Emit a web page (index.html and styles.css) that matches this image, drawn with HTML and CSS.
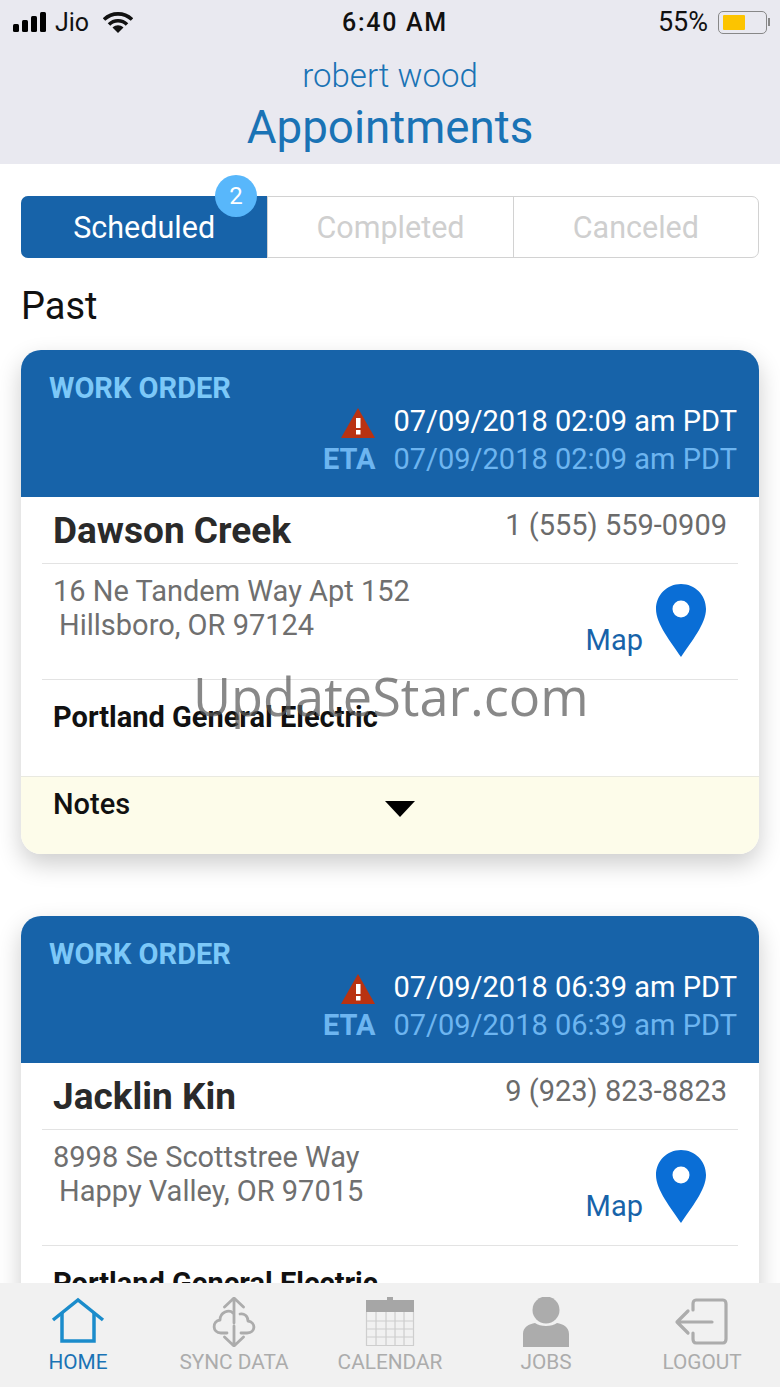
FILE: index.html
```html
<!DOCTYPE html>
<html lang="en">
<head>
    <meta charset="UTF-8">
    <meta name="viewport" content="width=device-width, initial-scale=1.0">
    <title>Appointments</title>
    <link rel="stylesheet" href="styles.css">
</head>
<body>
    <div class="app">
        <header class="top">
            <div class="status">
                <div class="status-left">
                    <svg class="signal" width="35" height="20" viewBox="0 0 35 20"><rect x="0" y="12" width="6" height="8" rx="1.5"/><rect x="9" y="8" width="6" height="12" rx="1.5"/><rect x="18" y="4" width="6" height="16" rx="1.5"/><rect x="27" y="0" width="6" height="20" rx="1.5"/></svg>
                    <span>Jio</span>
                    <svg class="wifi" width="30" height="21" viewBox="0 0 30 21"><path d="M1 7.5C9 0 21 0 29 7.5" fill="none" stroke="#111" stroke-width="3.6"/><path d="M6 12.5C11 7.5 19 7.5 24 12.5" fill="none" stroke="#111" stroke-width="3.6"/><path d="M9.5 15.5C13 12.5 17 12.5 20.5 15.5L15 21Z" fill="#111"/></svg>
                </div>
                <div class="status-time">6:40 AM</div>
                <div class="status-right">
                    <span>55%</span>
                    <div class="battery"><div class="battery-fill"></div></div>
                    <div class="battery-tip"></div>
                </div>
            </div>
            <div class="user">robert wood</div>
            <h1 class="title">Appointments</h1>
        </header>

        <main class="content">
            <div class="tabs">
                <div class="tab tab-active">Scheduled<span class="badge">2</span></div>
                <div class="tab">Completed</div>
                <div class="tab">Canceled</div>
            </div>
            <h2 class="section">Past</h2>

            <section class="card">
                <div class="card-head">
                    <div class="order">WORK ORDER</div>
                    <div class="date-row">
                        <svg class="warn" width="34" height="30" viewBox="0 0 34 30"><path d="M17 0L34 30H0Z" fill="#b93211"/><rect x="15" y="10" width="4.5" height="10" fill="#fff"/><rect x="15" y="22" width="4.5" height="4.5" fill="#fff"/></svg>
                        <span class="date">07/09/2018 02:09 am PDT</span>
                    </div>
                    <div class="date-row eta-row">
                        <b class="eta">ETA</b>
                        <span class="date">07/09/2018 02:09 am PDT</span>
                    </div>
                </div>
                <div class="row name-row">
                    <div class="name">Dawson Creek</div>
                    <div class="phone">1 (555) 559-0909</div>
                </div>
                <div class="row addr-row">
                    <div class="addr">16 Ne Tandem Way Apt 152<div class="addr-city">Hillsboro, OR 97124</div></div>
                    <div class="map">
                        <span>Map</span>
                        <svg width="50" height="73" viewBox="0 0 50 73"><path fill-rule="evenodd" d="M25 0C11 0 0 11 0 25C0 40 15 58 25 73C35 58 50 40 50 25C50 11 39 0 25 0ZM25 16.500A8.500 8.500 0 1 1 25 33.500A8.500 8.500 0 1 1 25 16.500Z" fill="#0a6ed6"/></svg>
                    </div>
                </div>
                <div class="company">Portland General Electric</div>
                <div class="notes">
                    <span>Notes</span>
                    <div class="caret"></div>
                </div>
            </section>

            <section class="card">
                <div class="card-head">
                    <div class="order">WORK ORDER</div>
                    <div class="date-row">
                        <svg class="warn" width="34" height="30" viewBox="0 0 34 30"><path d="M17 0L34 30H0Z" fill="#b93211"/><rect x="15" y="10" width="4.5" height="10" fill="#fff"/><rect x="15" y="22" width="4.5" height="4.5" fill="#fff"/></svg>
                        <span class="date">07/09/2018 06:39 am PDT</span>
                    </div>
                    <div class="date-row eta-row">
                        <b class="eta">ETA</b>
                        <span class="date">07/09/2018 06:39 am PDT</span>
                    </div>
                </div>
                <div class="row name-row">
                    <div class="name">Jacklin Kin</div>
                    <div class="phone">9 (923) 823-8823</div>
                </div>
                <div class="row addr-row">
                    <div class="addr">8998 Se Scottstree Way<div class="addr-city">Happy Valley, OR 97015</div></div>
                    <div class="map">
                        <span>Map</span>
                        <svg width="50" height="73" viewBox="0 0 50 73"><path fill-rule="evenodd" d="M25 0C11 0 0 11 0 25C0 40 15 58 25 73C35 58 50 40 50 25C50 11 39 0 25 0ZM25 16.500A8.500 8.500 0 1 1 25 33.500A8.500 8.500 0 1 1 25 16.500Z" fill="#0a6ed6"/></svg>
                    </div>
                </div>
                <div class="company">Portland General Electric</div>
            </section>
        </main>

        <nav class="tabbar">
            <div class="nav-item nav-active">
                <svg width="56" height="50" viewBox="0 0 56 50" fill="none" stroke="#1b8ccb" stroke-width="3.500"><path d="M3 23L28 3L53 23"/><path d="M12 16V44H44V16"/></svg>
                <span>HOME</span>
            </div>
            <div class="nav-item">
                <svg width="56" height="50" viewBox="0 0 56 50" fill="none" stroke="#acacac" stroke-width="2.800" stroke-linecap="round" stroke-linejoin="round"><path d="M28 1V26M18.500 10L28 1L37.500 10"/><path d="M28 29V49M18.500 40L28 49L37.500 40"/><path d="M21 36H15C6 36 6 24 14 23C14 15 23 12 27 16M35 36H41C50 36 50 25 42 24C42 19 38 16 34 17"/></svg>
                <span>SYNC DATA</span>
            </div>
            <div class="nav-item">
                <svg width="56" height="50" viewBox="0 0 56 50"><path d="M4 3H25V0H31V3H52V15H4Z" fill="#a6a6a6"/><path d="M4.500 15V48.500H51.500V15M4 24H52M4 32H52M4 40H52M14 15V48M24 15V48M33 15V48M42 15V48" fill="none" stroke="#cecece" stroke-width="1.200"/></svg>
                <span>CALENDAR</span>
            </div>
            <div class="nav-item">
                <svg width="56" height="50" viewBox="0 0 56 50" fill="#acacac"><circle cx="28" cy="13" r="13.500"/><path d="M5 50V37C5 30 11 27 17 26C22 30 34 30 39 26C45 27 51 30 51 37V50Z"/></svg>
                <span>JOBS</span>
            </div>
            <div class="nav-item">
                <svg width="56" height="50" viewBox="0 0 56 50" fill="none" stroke="#acacac" stroke-width="3.200" stroke-linecap="round" stroke-linejoin="round"><path d="M19 13V7C19 5 20 3 22 3H49C51 3 52 5 52 7V42C52 44 51 46 49 46H22C20 46 19 44 19 42V36"/><path d="M38 25H4M14 14L3 25L14 36"/></svg>
                <span>LOGOUT</span>
            </div>
        </nav>

        <div class="watermark">UpdateStar.com</div>
    </div>
</body>
</html>
```

FILE: styles.css
```css
* {
    box-sizing: border-box;
}
html, body {
    margin: 0;
    padding: 0;
}
body {
    font-family: Roboto, Arial, sans-serif;
    background: #fff;
}
.app {
    position: relative;
    width: 780px;
    height: 1387px;
    display: flex;
    flex-direction: column;
    overflow: hidden;
}

/* header */
.top {
    height: 164px;
    flex: none;
    background: #e9e9f0;
    text-align: center;
}
.status {
    height: 44px;
    display: grid;
    grid-template-columns: 1fr auto 1fr;
    align-items: center;
    padding: 0 10px 0 13px;
    font-size: 25px;
    color: #111;
}
.status-left {
    display: flex;
    align-items: center;
    gap: 7px;
}
.wifi {
    margin-left: 7px;
}
.status-time {
    padding-left: 7px;
    font-weight: 500;
    letter-spacing: 1.7px;
}
.status-right {
    display: flex;
    align-items: center;
    justify-content: flex-end;
    font-size: 27px;
}
.battery {
    width: 49px;
    height: 23px;
    margin-left: 10px;
    padding: 3px 4px;
    border: 1.5px solid #888;
    border-radius: 5px;
}
.battery-fill {
    width: 22px;
    height: 100%;
    background: #fcc400;
    border-radius: 1px;
}
.battery-tip {
    width: 2px;
    height: 8px;
    margin-left: 1px;
    background: #888;
}
.user {
    margin-top: 13px;
    font-size: 33px;
    line-height: 38px;
    font-weight: 300;
    color: #1a73b5;
}
.title {
    margin: 6px 0 0;
    font-size: 45.7px;
    line-height: 54px;
    font-weight: 400;
    color: #1a73b5;
}

/* main list */
.content {
    flex: 1;
    min-height: 0;
    overflow: hidden;
    padding: 32px 21px 0;
}
.tabs {
    display: grid;
    grid-template-columns: repeat(3, 1fr);
    height: 62px;
    border: 1px solid #d2d2d2;
    border-radius: 7px;
}
.tab {
    position: relative;
    display: flex;
    align-items: center;
    justify-content: center;
    font-size: 30.5px;
    color: #cfcfcf;
    border-left: 1px solid #d2d2d2;
}
.tab-active {
    margin: -1px 0 -1px -1px;
    background: #1763a9;
    color: #fff;
    border-left: 0;
    border-radius: 7px 0 0 7px;
}
.badge {
    position: absolute;
    top: -21px;
    left: 194px;
    width: 42px;
    height: 42px;
    border-radius: 50%;
    background: #58b7fb;
    color: #fff;
    font-size: 24px;
    line-height: 42px;
    text-align: center;
}
.section {
    margin: 26px 0 22px;
    font-size: 38px;
    line-height: 44px;
    font-weight: 400;
    color: #111;
}

/* appointment card */
.card {
    margin-bottom: 62px;
    border-radius: 20px;
    background: #fff;
    box-shadow: 0 10px 24px rgba(0, 0, 0, 0.2);
}
.card-head {
    height: 147px;
    padding: 21px 22px 0 28px;
    background: #1763a9;
    border-radius: 20px 20px 0 0;
}
.order {
    margin-bottom: -3px;
    font-size: 29px;
    line-height: 34px;
    font-weight: 700;
    color: #7cc8f8;
}
.date-row {
    display: flex;
    align-items: center;
    justify-content: flex-end;
    gap: 18px;
    height: 38px;
    font-size: 29px;
    color: #fff;
}
.warn {
    margin-top: 3px;
}
.eta-row {
    color: #6db5f0;
}
.eta {
    font-weight: 700;
}
.row {
    display: flex;
    justify-content: space-between;
    margin: 0 21px;
    padding: 0 11px;
    border-bottom: 1.5px solid #e3e3e3;
}
.name-row {
    height: 67px;
}
.name {
    margin-top: 13px;
    font-size: 37px;
    line-height: 42px;
    font-weight: 700;
    color: #2a2a2a;
}
.phone {
    margin-top: 10px;
    font-size: 29px;
    line-height: 36px;
    color: #6b6b6b;
}
.addr-row {
    height: 116px;
    padding-right: 32px;
}
.addr {
    margin-top: 10px;
    font-size: 29px;
    line-height: 34px;
    color: #6f6f6f;
}
.addr-city {
    margin-left: 6px;
}
.map {
    display: flex;
    align-items: flex-end;
    gap: 13px;
    margin-top: 20px;
    height: 73px;
    font-size: 29px;
    line-height: 34px;
    color: #1763a9;
}
.company {
    height: 96px;
    padding: 19px 32px 0;
    font-size: 29px;
    line-height: 36px;
    font-weight: 700;
    color: #111;
}
.notes {
    position: relative;
    height: 78px;
    padding: 9px 32px 0;
    background: #fdfcea;
    border-top: 1.5px solid #e9e9e0;
    border-radius: 0 0 20px 20px;
    font-size: 29px;
    line-height: 36px;
    font-weight: 500;
    color: #111;
}
.caret {
    position: absolute;
    top: 24px;
    left: 364px;
    border-left: 15px solid transparent;
    border-right: 15px solid transparent;
    border-top: 16px solid #000;
}

/* bottom nav */
.tabbar {
    position: relative;
    height: 104px;
    flex: none;
    display: grid;
    grid-template-columns: repeat(5, 156px);
    background: #f1f1f1;
}
.nav-item {
    display: flex;
    flex-direction: column;
    align-items: center;
    padding-top: 14px;
    font-size: 20.8px;
    line-height: 26px;
    color: #acacac;
}
.nav-item span {
    margin-top: 2px;
}
.nav-active {
    color: #1a73b5;
}

/* video site stamp over the screenshot */
.watermark {
    position: absolute;
    top: 660px;
    left: 193px;
    font-family: "Open Sans", sans-serif;
    font-size: 52.3px;
    line-height: 72px;
    color: rgba(90, 90, 90, 0.72);
    white-space: nowrap;
}
```
